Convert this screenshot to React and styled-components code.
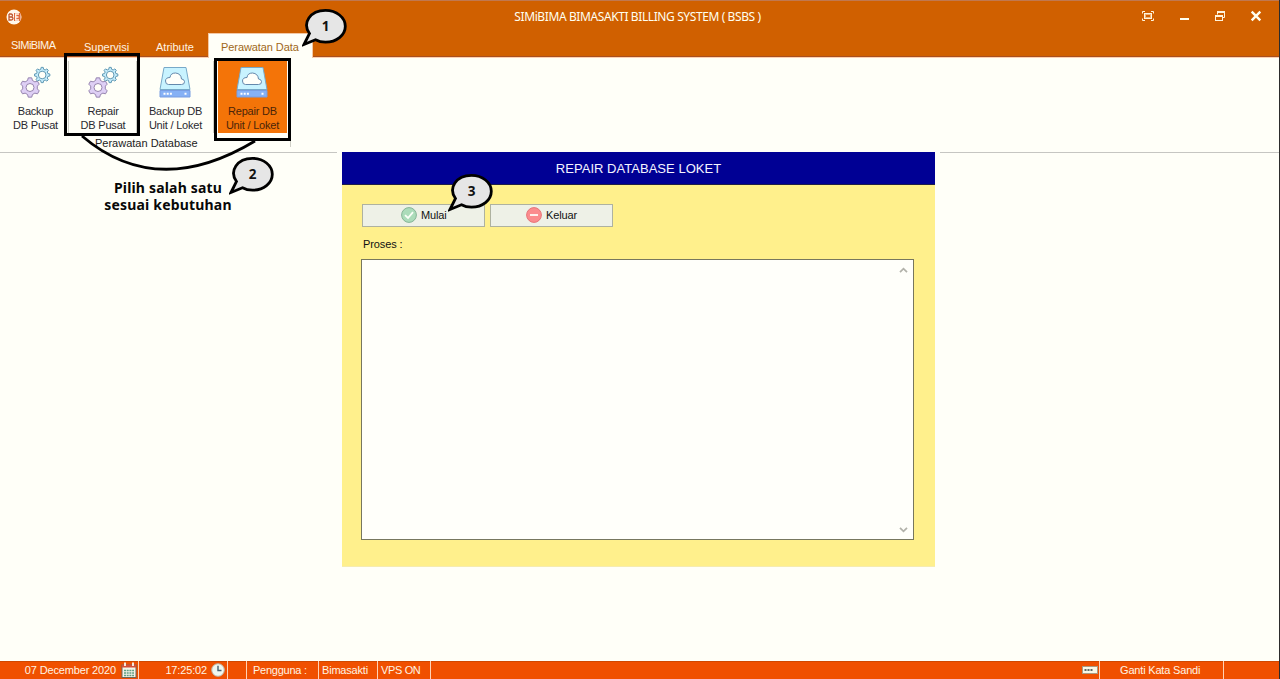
import React from 'react';
import styled, { createGlobalStyle } from 'styled-components';

const Global = createGlobalStyle`
  * { box-sizing: border-box; }
  html, body { margin: 0; padding: 0; overflow: hidden; }
  body { font-family: "Liberation Sans", Arial, sans-serif; font-size: 11px; color: #222; }
  svg { display: block; flex: none; }
`;

const Window = styled.div`
  position: relative;
  width: 1280px;
  height: 679px;
  display: flex;
  flex-direction: column;
  background: #fffff8;
  border-right: 1px solid #2c2c2c;
  overflow: hidden;
`;

const Header = styled.header`
  height: 58px;
  flex: none;
  background: #d06000;
  border-top: 1px solid #c07850;
  box-shadow: inset 0 -1px #ffd0b0, inset 0 -2px #a85020;
`;

const TitleBar = styled.div`
  display: grid;
  grid-template-columns: 240px 1fr 240px;
  align-items: center;
  height: 32px;
  padding-bottom: 2px;
  color: #fffff0;
`;

const LogoSlot = styled.div`padding: 1px 0 0 6px;`;

const Title = styled.div`
  padding: 1px 4px 0 0;
  text-align: center;
  font: 12px "Noto Sans", "Open Sans", sans-serif;
  letter-spacing: -0.4px;
  white-space: pre;
`;

const Controls = styled.div`
  display: flex;
  justify-content: flex-end;
  gap: 24px;
  padding-right: 17px;
`;

const Tabs = styled.nav`
  display: flex;
  height: 25px;
`;

const Tab = styled.div`
  width: ${p => p.$w}px;
  padding: ${p => p.$top || 8}px 0 0 ${p => p.$pad}px;
  line-height: 13px;
  letter-spacing: ${p => p.$ls || 0}px;
  white-space: nowrap;
  color: ${p => (p.$active ? '#a06818' : '#fff4e4')};
  background: ${p => (p.$active ? '#fffff8' : 'transparent')};
  box-shadow: ${p => (p.$active ? 'inset 1px 1px #f4c8a4, inset -1px 0 #f4c8a4' : 'none')};
`;

const Ribbon = styled.section`
  display: flex;
  flex-direction: column;
  width: 291px;
  height: 94px;
  flex: none;
`;

const Tools = styled.div`
  display: flex;
  height: 79px;
  padding-top: 3px;
`;

const Tool = styled.div`
  display: flex;
  flex-direction: column;
  align-items: center;
  width: ${p => p.$w}px;
  height: 72px;
  margin-left: ${p => p.$ml || 0}px;
  padding-top: 5px;
  background: ${p => (p.$active ? '#f47408' : 'transparent')};
  color: ${p => (p.$active ? '#4a2408' : '#2a2a30')};
  box-shadow: ${p => (p.$line ? 'inset -1px 0 #cfcfc6' : 'none')};
  svg { margin-left: -1px; }
`;

const ToolLabel = styled.div`
  margin-top: 6px;
  text-align: center;
  line-height: 14px;
  letter-spacing: ${p => p.$ls || -0.2}px;
  white-space: pre;
`;

const GroupLabel = styled.div`
  height: 10px;
  padding-left: 95px;
  line-height: 12px;
  border-right: 1px solid #cfcfc6;
`;

const Main = styled.main`
  display: flex;
  flex: 1;
`;

const Side = styled.div`
  width: ${p => p.$w}px;
  border-top: 1px solid #c6c6c2;
`;

const Dialog = styled.section`
  width: 593px;
  height: 415px;
  margin: 0 5px;
  background: #fff08c;
  box-shadow: inset 0 -1px #f6ecb0;
`;

const DialogTitle = styled.div`
  height: 33px;
  line-height: 33px;
  text-align: center;
  font-size: 13px;
  letter-spacing: 0.03px;
  color: #f4f4ff;
  background: #000094;
  border-bottom: 1px solid #202048;
`;

const DialogBody = styled.div`padding: 19px 21px 27px 19px;`;

const Buttons = styled.div`
  display: flex;
  gap: 5px;
  padding-left: 1px;
`;

const Button = styled.div`
  display: flex;
  align-items: center;
  gap: 4px;
  width: 123px;
  height: 23px;
  padding: 0 0 2px ${p => p.$pad}px;
  letter-spacing: -0.15px;
  color: #111;
  background: #eef1e7;
  border: 1px solid #aeb2a0;
`;

const FieldLabel = styled.div`
  padding: 11px 0 8px 2px;
  line-height: 13px;
  letter-spacing: -0.1px;
  color: #111;
`;

const Output = styled.div`
  display: flex;
  flex-direction: column;
  align-items: flex-end;
  justify-content: space-between;
  width: 553px;
  height: 281px;
  padding: 7px 5px 6px;
  background: #fffffa;
  border: 1px solid #77775e;
`;

const Status = styled.footer`
  display: flex;
  height: 18px;
  flex: none;
  background: #f05000;
  box-shadow: 0 1px #d04800 inset;
  color: #fff4e4;
`;

const Cell = styled.div`
  display: flex;
  align-items: center;
  justify-content: ${p => p.$end ? 'flex-end' : 'flex-start'};
  gap: ${p => p.$gap || 5}px;
  width: ${p => p.$w}px;
  padding-left: ${p => p.$pad || 0}px;
  padding-right: ${p => p.$end || 0}px;
  letter-spacing: ${p => p.$ls || -0.15}px;
  white-space: pre;
  border-right: ${p => p.$open ? 'none' : '1px solid #ffd2b4'};
`;

const Spacer = styled.div`flex: 1;`;

const Frame = styled.div`
  position: absolute;
  left: ${p => p.$x}px;
  top: ${p => p.$y}px;
  width: ${p => p.$w}px;
  height: ${p => p.$h}px;
  border: 3px solid #000;
`;

const Curve = styled.svg`
  position: absolute;
  left: 75px;
  top: 130px;
`;

const Bubble = styled.div`
  position: absolute;
  left: ${p => p.$x}px;
  top: ${p => p.$y}px;
  width: 46px;
  height: 40px;
`;

const BubbleNumber = styled.span`
  position: absolute;
  left: 4px;
  top: 9px;
  width: 39px;
  text-align: center;
  font: bold 13.5px/20px "Noto Sans", "Open Sans", sans-serif;
  color: #111;
`;

const Note = styled.div`
  position: absolute;
  left: 88px;
  top: 179px;
  width: 160px;
  text-align: center;
  font: bold 14px/17px "Noto Sans", "Open Sans", sans-serif;
  letter-spacing: 0.18px;
  color: #080808;
`;

const gearPath = (cx, cy, r, teeth) => {
  const pts = [];
  const step = (Math.PI * 2) / teeth;
  for (let i = 0; i < teeth; i += 1) {
    const a = i * step - Math.PI / 2;
    [[-0.32, 0.76], [-0.17, 1], [0.17, 1], [0.32, 0.76]].forEach(([o, k]) => {
      const t = a + o * step;
      pts.push(`${(cx + r * k * Math.cos(t)).toFixed(2)} ${(cy + r * k * Math.sin(t)).toFixed(2)}`);
    });
  }
  return `M${pts.join('L')}Z`;
};

const Gears = () => (
  <svg width="32" height="32" viewBox="0 0 32 32">
    <path d={gearPath(11, 21.5, 9.8, 6)} fill="#decff5" stroke="#9583ae" />
    <circle cx="11" cy="21.5" r="4" fill="#fffff8" stroke="#9583ae" />
    <path d={gearPath(23.2, 9, 7.7, 8)} fill="#c4ecfb" stroke="#6199b4" />
    <circle cx="23.2" cy="9" r="3.8" fill="#fffff8" stroke="#6199b4" />
  </svg>
);

const Drive = () => (
  <svg width="32" height="32" viewBox="0 0 32 32">
    <path d="M5 1.5H27L31 23.5H1Z" fill="#c8f3ff" stroke="#78a9c8" />
    <path d="M1 24.5H31V31H1Z" fill="#86b1f5" stroke="#799de0" />
    <path d="M9.5 18.5H22.5Q25.8 18.5 25.5 15.5Q25 13 22.5 13Q22 7.5 16.5 7Q11.5 7 11 11.5Q6.5 11.5 6.5 15Q6.5 18.5 9.5 18.5Z" fill="#fffffa" stroke="#6488ac" />
    <path d="M4.5 27.8H6.5M7.7 27.8H9.7M10.9 27.8H12.9M25.5 27.8H27.5" stroke="#fff" strokeWidth="2" />
  </svg>
);

const Logo = () => (
  <svg width="16" height="16" viewBox="0 0 16 16">
    <circle cx="8" cy="8" r="7.5" fill="#fff8ec" />
    <path d="M8 4H14.5V12H8Z" fill="#e06a3c" />
    <path d="M3 5V11H5.2Q7 11 7 9.5Q7 8 5.2 8H3M3 5H5Q6.5 5 6.5 6.5Q6.5 8 5 8" fill="none" stroke="#c05830" strokeWidth="1.3" />
    <path d="M13 5H9.7V11H13M9.7 8H12.5" fill="none" stroke="#fff8ec" strokeWidth="1.3" />
  </svg>
);

const WindowControls = () => (
  <Controls>
    <svg width="12" height="12" viewBox="0 0 12 12">
      <path d="M.5 3.5V1.5H3M9 1.5H11.5V3.5M.5 8.5V10.5H3M9 10.5H11.5V8.5" fill="none" stroke="#fff4dc" />
      <rect x="2.5" y="3.5" width="7" height="5" fill="#d06000" stroke="#fff4dc" />
      <rect x="3.5" y="4.5" width="5" height="3" fill="none" stroke="#f0b478" />
    </svg>
    <svg width="12" height="12" viewBox="0 0 12 12"><path d="M2 9H11" stroke="#fffff0" strokeWidth="2" /></svg>
    <svg width="12" height="12" viewBox="0 0 12 12">
      <path d="M3.5 4.5V2H10.5V7.5H8.5" fill="none" stroke="#fff4dc" />
      <path d="M3 2H11" stroke="#fff4dc" strokeWidth="2" />
      <rect x="1.5" y="5.5" width="7" height="5" fill="#d06000" stroke="#fff4dc" />
      <path d="M1 6H9" stroke="#fff4dc" strokeWidth="2" />
    </svg>
    <svg width="12" height="12" viewBox="0 0 12 12"><path d="M1.7 1.7L10.3 10.3M10.3 1.7L1.7 10.3" stroke="#fffff0" strokeWidth="2.4" /></svg>
  </Controls>
);

const CheckIcon = () => (
  <svg width="16" height="16" viewBox="0 0 16 16">
    <circle cx="8" cy="8" r="7.4" fill="#acdcba" stroke="#86b496" />
    <path d="M4 8.2L7 11L12 5.2" fill="none" stroke="#fbfff8" strokeWidth="1.8" />
  </svg>
);

const StopIcon = () => (
  <svg width="16" height="16" viewBox="0 0 16 16">
    <circle cx="8" cy="8" r="7.4" fill="#fb8c8e" stroke="#e87478" />
    <path d="M4 8H12" stroke="#fff0ec" strokeWidth="2" />
  </svg>
);

const Arrow = ({ down }) => (
  <svg width="9" height="6" viewBox="0 0 9 6">
    <path d={down ? 'M1 .8L4.5 4.4L8 .8' : 'M1 5.2L4.5 1.6L8 5.2'} fill="none" stroke="#b2b2aa" strokeWidth="1.7" />
  </svg>
);

const CalendarIcon = () => (
  <svg width="16" height="16" viewBox="0 0 16 16">
    <rect x="1" y="3" width="14" height="12.5" fill="#f4f4e8" stroke="#6d6658" />
    <path d="M1 4H15" stroke="#d45038" strokeWidth="3" />
    <path d="M4 .5V4M12 .5V4" stroke="#f4e8dc" strokeWidth="2" />
    <path d="M3 8.5H13M3 11H13M3 13.5H13" stroke="#62a080" strokeWidth="1.6" strokeDasharray="2 .7" />
  </svg>
);

const ClockIcon = () => (
  <svg width="14" height="14" viewBox="0 0 14 14">
    <circle cx="7" cy="7" r="6.3" fill="#eff7ef" stroke="#b9b4a4" />
    <path d="M7 2.8V7.5H10.5" fill="none" stroke="#456070" strokeWidth="1.4" />
  </svg>
);

const PasswordIcon = () => (
  <svg width="16" height="8" viewBox="0 0 16 8">
    <rect x=".5" y=".5" width="15" height="7" fill="#f8f8e8" stroke="#a99b82" />
    <path d="M2.5 4H4.5M5.5 4H7.5M8.5 4H10.5" stroke="#5e6964" strokeWidth="2" />
  </svg>
);

const Callout = ({ x, y, number }) => (
  <Bubble $x={x} $y={y}>
    <svg width="46" height="40" viewBox="0 0 46 40">
      <path d="M7.5 26.5C0 16 8 3.3 23.5 3.3C34.5 3.3 43.3 10.5 43.3 19.3C43.3 28.3 34.5 35.2 23.5 35.2C19.5 35.2 16.5 34.5 13.5 32.8L2 37.5Z" fill="#e6e6e6" stroke="#000" strokeWidth="2.8" strokeLinejoin="miter" />
    </svg>
    <BubbleNumber>{number}</BubbleNumber>
  </Bubble>
);

export default function App() {
  return (
    <Window>
      <Global />
      <Header>
        <TitleBar>
          <LogoSlot><Logo /></LogoSlot>
          <Title>SIMiBIMA BIMASAKTI BILLING SYSTEM ( BSBS )</Title>
          <WindowControls />
        </TitleBar>
        <Tabs>
          <Tab $w={73} $pad={11} $top={6} $ls={-0.55}>SIMiBIMA</Tab>
          <Tab $w={72} $pad={11}>Supervisi</Tab>
          <Tab $w={63} $pad={11}>Atribute</Tab>
          <Tab $w={105} $pad={13} $ls={-0.08} $active>Perawatan Data</Tab>
        </Tabs>
      </Header>
      <Ribbon>
        <Tools>
          <Tool $w={67} $ml={2} $line><Gears /><ToolLabel>{'Backup\nDB Pusat'}</ToolLabel></Tool>
          <Tool $w={68} $line><Gears /><ToolLabel>{'Repair\nDB Pusat'}</ToolLabel></Tool>
          <Tool $w={77} $line><Drive /><ToolLabel>{'Backup DB\nUnit / Loket'}</ToolLabel></Tool>
          <Tool $w={69} $ml={4} $active><Drive /><ToolLabel>{'Repair DB\nUnit / Loket'}</ToolLabel></Tool>
        </Tools>
        <GroupLabel>Perawatan Database</GroupLabel>
      </Ribbon>
      <Main>
        <Side $w={337} />
        <Dialog>
          <DialogTitle>REPAIR DATABASE LOKET</DialogTitle>
          <DialogBody>
            <Buttons>
              <Button $pad={38}><CheckIcon />Mulai</Button>
              <Button $pad={35}><StopIcon />Keluar</Button>
            </Buttons>
            <FieldLabel>Proses :</FieldLabel>
            <Output><Arrow /><Arrow down /></Output>
          </DialogBody>
        </Dialog>
        <Side $w={339} />
      </Main>
      <Status>
        <Cell $w={139} $end={1}>07 December 2020<CalendarIcon /></Cell>
        <Cell $w={89} $end={2} $gap={4}>17:25:02<ClockIcon /></Cell>
        <Cell $w={19} />
        <Cell $w={72} $pad={6} $ls={-0.25}>Pengguna :</Cell>
        <Cell $w={59} $pad={3} $ls={-0.2}>Bimasakti</Cell>
        <Cell $w={53} $pad={3} $ls={-0.35}>VPS ON</Cell>
        <Spacer />
        <Cell $w={40} $end={1}><PasswordIcon /></Cell>
        <Cell $w={124} $pad={20} $ls={-0.18}>Ganti Kata Sandi</Cell>
        <Cell $w={55} $open />
      </Status>
      <Frame $x={64} $y={53} $w={76} $h={83} />
      <Frame $x={214} $y={58} $w={77} $h={83} />
      <Curve width="190" height="50" viewBox="0 0 190 50">
        <path d="M7 6Q82 70 180 11" fill="none" stroke="#000" strokeWidth="2.8" />
      </Curve>
      <Note>Pilih salah satu<br />sesuai kebutuhan</Note>
      <Callout x={302} y={7} number="1" />
      <Callout x={229} y={155} number="2" />
      <Callout x={448} y={172} number="3" />
    </Window>
  );
}
